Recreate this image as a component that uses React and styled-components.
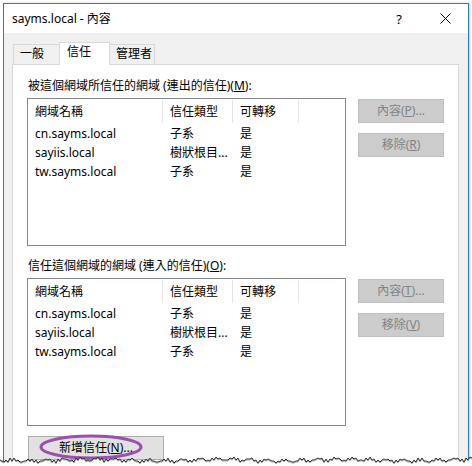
import React from 'react';
import styled, { createGlobalStyle } from 'styled-components';

const GlobalStyle = createGlobalStyle`
  body {
    margin: 0;
    background: #fff;
  }
`;

const Page = styled.div`
  position: relative;
  width: 472px;
  height: 466px;
  overflow: hidden;
  background: #fff;
  font-family: "Noto Sans", "Noto Sans CJK TC", sans-serif;
  font-size: 12px;
  color: #000;
`;

const Window = styled.div`
  box-sizing: border-box;
  margin: 3px 0 0 3px;
  width: 466px;
  height: 463px;
  border: 1px solid #2b79d2;
  border-bottom: none;
  background: #f0f0f0;
  display: flex;
  flex-direction: column;
  box-shadow: 1px 0 2px rgba(0, 0, 0, 0.2);
`;

const TitleBar = styled.div`
  height: 29px;
  flex: none;
  background: #fff;
  display: flex;
  align-items: center;
`;

const Title = styled.div`
  flex: 1;
  padding-left: 8px;
  line-height: 16px;
`;

const CaptionButton = styled.div`
  width: 46px;
  height: 29px;
  display: flex;
  align-items: center;
  justify-content: center;
  font-size: 13px;
  line-height: 16px;
`;

const Body = styled.div`
  flex: 1;
  display: flex;
  flex-direction: column;
  padding: 9px 9px 0 8px;
`;

const TabRow = styled.div`
  display: flex;
  align-items: flex-end;
  height: 22px;
  padding-left: 1px;
`;

const Tab = styled.div`
  box-sizing: border-box;
  width: ${p => p.$w}px;
  height: ${p => (p.$active ? 23 : 20)}px;
  margin-bottom: ${p => (p.$active ? -1 : 0)}px;
  padding: 1px 0 0 ${p => p.$pad || 6}px;
  line-height: 16px;
  border: 1px solid #d9d9d9;
  border-bottom: none;
  ${p => p.$noLeft && 'border-left: none;'}
  ${p => p.$noRight && 'border-right: none;'}
  background: ${p => (p.$active ? '#fff' : '#f0f0f0')};
  position: relative;
  z-index: ${p => (p.$active ? 1 : 0)};
`;

const Panel = styled.div`
  flex: 1;
  background: #fff;
  border: 1px solid #d9d9d9;
  border-bottom: none;
  padding: 13px 0 0 14px;
  display: flex;
  flex-direction: column;
`;

const Label = styled.div`
  line-height: 16px;
  margin: ${p => p.$top || 0}px 0 0 1px;
`;

const Key = styled.span`
  text-decoration: underline;
  text-underline-offset: 1px;
`;

const Row = styled.div`
  display: flex;
  align-items: flex-start;
  margin-top: 4px;
`;

const ListBox = styled.div`
  box-sizing: border-box;
  width: 319px;
  height: 148px;
  border: 1px solid #828790;
  background: #fff;
`;

const Grid = styled.div`
  display: grid;
  grid-template-columns: 135px 70px 66px;
`;

const HeaderCell = styled.div`
  height: 23px;
  margin: 1px 0;
  line-height: 23px;
  padding-left: 7px;
  border-right: 1px solid #e5e5e5;
`;

const Cell = styled.div`
  height: 19px;
  line-height: 19px;
  padding-left: 7px;
  white-space: nowrap;
  overflow: hidden;
`;

const ButtonColumn = styled.div`
  display: flex;
  flex-direction: column;
  gap: 10px;
  margin: 1px 0 0 12px;
`;

const Button = styled.div`
  box-sizing: border-box;
  position: relative;
  width: ${p => p.$w || 86}px;
  height: 24px;
  display: flex;
  align-items: center;
  justify-content: center;
  line-height: 16px;
  background: ${p => (p.$disabled ? '#cccccc' : '#e1e1e1')};
  border: 1px solid ${p => (p.$disabled ? '#bfbfbf' : '#adadad')};
  color: ${p => (p.$disabled ? '#838383' : '#000')};
`;

const Footer = styled.div`
  margin: 10px 0 0 1px;
`;

const Circle = styled.svg`
  position: absolute;
  left: 10px;
  top: -3px;
  overflow: visible;
`;

const TornEdge = styled.svg`
  position: absolute;
  left: 0;
  top: 453px;
`;

const columns = ['網域名稱', '信任類型', '可轉移'];
const trusts = [
  ['cn.sayms.local', '子系', '是'],
  ['sayiis.local', '樹狀根目...', '是'],
  ['tw.sayms.local', '子系', '是'],
];

function TrustList() {
  return (
    <ListBox>
      <Grid>
        {columns.map(c => <HeaderCell key={c}>{c}</HeaderCell>)}
        {trusts.map(r => r.map((v, i) => <Cell key={r[0] + i}>{v}</Cell>))}
      </Grid>
    </ListBox>
  );
}

// jagged "torn paper" line along the bottom of the capture
function tornPoints() {
  const pts = [];
  for (let x = 0; x <= 472; x += 2) {
    const y = 7 + Math.round(Math.sin(x * 0.37) * 1.3 + Math.sin(x * 1.71) * 1.4 + Math.sin(x * 0.05) * 0.8);
    pts.push([x, y]);
  }
  return pts;
}

function App() {
  const pts = tornPoints();
  const line = pts.map(([x, y]) => `${x},${y}`).join(' ');
  const shade = pts.map(([x, y]) => `${x},${y + 1}`).join(' ');
  return (
    <Page>
      <GlobalStyle />
      <Window>
        <TitleBar>
          <Title>sayms.local - 內容</Title>
          <CaptionButton>?</CaptionButton>
          <CaptionButton>
            <svg width="11" height="11" viewBox="0 0 11 11">
              <path d="M0.5 0.5 L10.5 10.5 M10.5 0.5 L0.5 10.5" stroke="#000" strokeWidth="1" fill="none" />
            </svg>
          </CaptionButton>
        </TitleBar>
        <Body>
          <TabRow>
            <Tab $w={46} $noRight>一般</Tab>
            <Tab $w={51} $active $pad={7}>信任</Tab>
            <Tab $w={45} $noLeft>管理者</Tab>
          </TabRow>
          <Panel>
            <Label>被這個網域所信任的網域 (連出的信任)(<Key>M</Key>):</Label>
            <Row>
              <TrustList />
              <ButtonColumn>
                <Button $disabled>內容(<Key>P</Key>)...</Button>
                <Button $disabled>移除(<Key>R</Key>)</Button>
              </ButtonColumn>
            </Row>
            <Label $top={12}>信任這個網域的網域 (連入的信任)(<Key>O</Key>):</Label>
            <Row>
              <TrustList />
              <ButtonColumn>
                <Button $disabled>內容(<Key>T</Key>)...</Button>
                <Button $disabled>移除(<Key>V</Key>)</Button>
              </ButtonColumn>
            </Row>
            <Footer>
              <Button $w={136}>
                新增信任(<Key>N</Key>)...
                <Circle width="104" height="26" viewBox="0 0 104 26">
                  <ellipse cx="52" cy="13" rx="50" ry="11" stroke="#9b4fae" strokeWidth="3" fill="none" />
                </Circle>
              </Button>
            </Footer>
          </Panel>
        </Body>
      </Window>
      <TornEdge width="472" height="13" viewBox="0 0 472 13">
        <polygon points={`${line} 472,13 0,13`} fill="#fff" />
        <polyline points={shade} stroke="#aaa" strokeWidth="1" fill="none" />
        <polyline points={line} stroke="#333" strokeWidth="1" fill="none" />
      </TornEdge>
    </Page>
  );
}

export default App;
